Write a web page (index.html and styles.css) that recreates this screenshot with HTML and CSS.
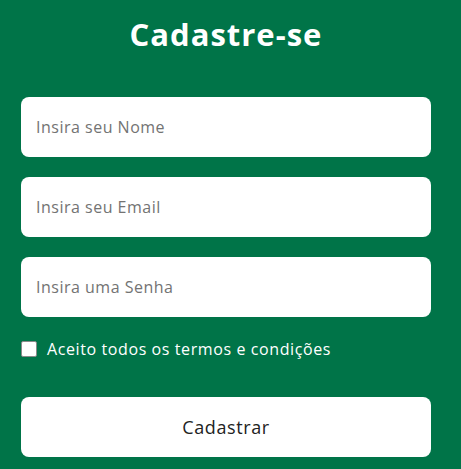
FILE: index.html
```html
<!DOCTYPE html>
<html lang="pt-BR">
<head>
<meta charset="utf-8">
<title>Cadastre-se</title>
<link rel="stylesheet" href="styles.css">
</head>
<body>
<form class="card">
  <h1 class="title">Cadastre-se</h1>
  <input class="field" type="text" placeholder="Insira seu Nome">
  <input class="field" type="email" placeholder="Insira seu Email">
  <input class="field" type="password" placeholder="Insira uma Senha">
  <label class="terms"><span class="box"></span>Aceito todos os termos e condições</label>
  <button class="submit" type="button">Cadastrar</button>
</form>
</body>
</html>
```
FILE: styles.css
```css
html, body {
  margin: 0;
  padding: 0;
  background: #007448;
}
body {
  font-family: "Open Sans", "DejaVu Sans", sans-serif;
}
.card {
  display: flex;
  flex-direction: column;
  width: 410px;
  padding: 0 0 0 21px;
}
.title {
  margin: 14px 0 43px;
  text-align: center;
  color: #fff;
  font-size: 31px;
  line-height: 40px;
  font-weight: 700;
  letter-spacing: 1px;
}
.field {
  box-sizing: border-box;
  height: 60px;
  margin: 0 0 20px;
  padding: 0 15px;
  border: none;
  border-radius: 8px;
  background: #fff;
  font-family: inherit;
  font-size: 16px;
  letter-spacing: 0.5px;
  color: #333;
  outline: none;
}
.field::placeholder {
  color: #737373;
}
.terms {
  display: flex;
  align-items: center;
  gap: 10px;
  margin: 0 0 36px;
  height: 24px;
  color: #fff;
  font-size: 16px;
  letter-spacing: 0.6px;
}
.box {
  box-sizing: border-box;
  width: 16px;
  height: 16px;
  background: #fff;
  border: 1px solid #8a8a8a;
  border-radius: 2px;
}
.submit {
  height: 60px;
  border: none;
  border-radius: 8px;
  background: #fff;
  font-family: inherit;
  font-size: 18px;
  letter-spacing: 0.6px;
  color: #222;
  cursor: pointer;
}
```
